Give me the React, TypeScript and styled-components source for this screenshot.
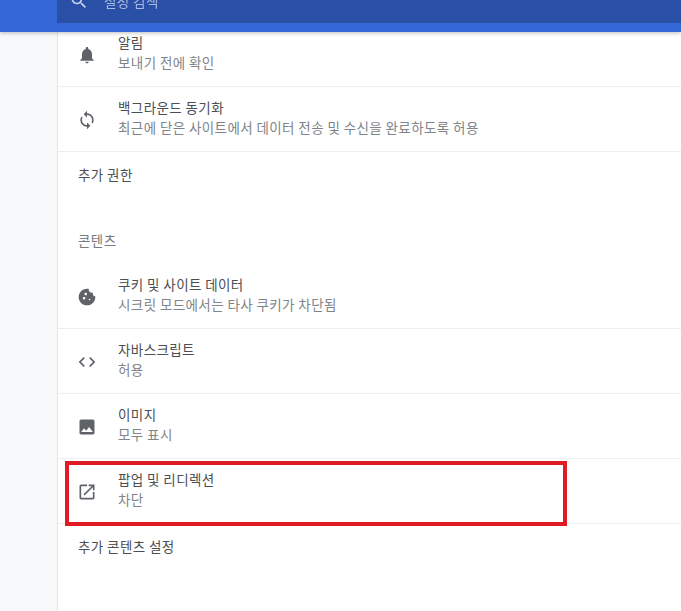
import { ReactNode } from "react";
import styled, { createGlobalStyle } from "styled-components";

const GlobalStyle = createGlobalStyle`
  html, body {
    margin: 0;
    height: 100%;
    overflow: hidden;
    background: #f8f9fb;
    font-family: "Noto Sans CJK KR", "Noto Sans", sans-serif;
  }
`;

const Page = styled.div`
  width: 681px;
  height: 611px;
  overflow: hidden;
  display: flex;
  flex-direction: column;
  filter: blur(0.45px);
`;

const Header = styled.header`
  position: relative;
  z-index: 2;
  height: 32px;
  flex: none;
  padding-left: 57px;
  background: #3367d6;
  box-shadow: 0 1px 4px rgba(60, 64, 67, 0.35);
`;

const SearchBox = styled.div`
  height: 23px;
  box-sizing: border-box;
  padding: 0 0 12px 12px;
  display: flex;
  align-items: flex-end;
  overflow: hidden;
  background: #2a4fa6;
  color: #c3d0ec;
`;

const SearchText = styled.span`
  margin-left: 15px;
  font-size: 13.5px;
  line-height: 20px;
  letter-spacing: 0.4px;
  color: #a9bbe2;
`;

const Panel = styled.main`
  flex: 1;
  margin-left: 57px;
  background: #fff;
  border-left: 1px solid #e3e5ea;
`;

const Row = styled.div<{ $clipped?: boolean }>`
  position: relative;
  height: 65px;
  margin-top: ${(props) => (props.$clipped ? "-10px" : "0")};
  padding: 0 0 4px 19px;
  box-sizing: border-box;
  display: flex;
  align-items: center;
  border-bottom: 1px solid #eceef0;
`;

const IconSlot = styled.div`
  width: 20px;
  height: 20px;
  margin-top: 6px;
  margin-right: 21px;
  color: #5f6368;
  svg {
    display: block;
    width: 20px;
    height: 20px;
    fill: currentColor;
  }
`;

const Title = styled.div`
  font-size: 13.5px;
  line-height: 20px;
  letter-spacing: 0.4px;
  color: #4b4e52;
`;

const Sub = styled.div`
  font-size: 13.5px;
  line-height: 20px;
  letter-spacing: 0.4px;
  color: #808489;
`;

const PlainLink = styled.div<{ $height: number }>`
  height: ${(props) => props.$height}px;
  padding-left: 20px;
  font-size: 13.5px;
  line-height: 45px;
  letter-spacing: 0.4px;
  color: #4b4e52;
`;

const SectionTitle = styled.h2`
  margin: 0;
  height: 66px;
  padding: 32px 0 0 20px;
  box-sizing: border-box;
  font-size: 13.5px;
  font-weight: 400;
  line-height: 20px;
  letter-spacing: 0.4px;
  color: #777b80;
`;

const Highlight = styled.div`
  position: absolute;
  left: 7px;
  top: 2px;
  width: 502px;
  height: 65px;
  box-sizing: border-box;
  border: 4px solid #e01b24;
`;

const icons: Record<string, string> = {
  bell: "M12 22c1.1 0 2-.9 2-2h-4c0 1.1.9 2 2 2zm6-6v-5c0-3.07-1.63-5.64-4.5-6.32V4c0-.83-.67-1.5-1.5-1.5s-1.5.67-1.5 1.5v.68C7.64 5.36 6 7.92 6 11v5l-2 2v1h16v-1l-2-2z",
  sync: "M12 4V1L8 5l4 4V6c3.31 0 6 2.69 6 6 0 1.01-.25 1.97-.7 2.8l1.46 1.46C19.54 15.03 20 13.57 20 12c0-4.42-3.58-8-8-8zm0 14c-3.31 0-6-2.69-6-6 0-1.01.25-1.97.7-2.8L5.24 7.74C4.46 8.97 4 10.43 4 12c0 4.42 3.58 8 8 8v3l4-4-4-4v3z",
  cookie: "M21.95 10.99c-1.79-.03-3.7-1.95-2.68-4.22-2.97 1-5.78-1.59-5.19-4.56C7.11.74 2 6.41 2 12c0 5.52 4.48 10 10 10 5.89 0 10.54-5.08 9.95-11.01zM8.5 15c-.83 0-1.5-.67-1.5-1.5S7.67 12 8.5 12s1.5.67 1.5 1.5S9.33 15 8.5 15zm2-5C9.67 10 9 9.33 9 8.5S9.67 7 10.5 7s1.5.67 1.5 1.5-.67 1.5-1.5 1.5zm4.5 6c-.55 0-1-.45-1-1s.45-1 1-1 1 .45 1 1-.45 1-1 1z",
  code: "M9.4 16.6L4.8 12l4.6-4.6L8 6l-6 6 6 6 1.4-1.4zm5.2 0l4.6-4.6-4.6-4.6L16 6l6 6-6 6-1.4-1.4z",
  image: "M21 19V5c0-1.1-.9-2-2-2H5c-1.1 0-2 .9-2 2v14c0 1.1.9 2 2 2h14c1.1 0 2-.9 2-2zM8.5 13.5l2.5 3.01L14.5 12l4.5 6H5l3.5-4.5z",
  open: "M19 19H5V5h7V3H5c-1.11 0-2 .9-2 2v14c0 1.1.89 2 2 2h14c1.1 0 2-.9 2-2v-7h-2v7zM14 3v2h3.59l-9.83 9.83 1.41 1.41L19 6.41V10h2V3h-7z",
};

const Icon = ({ name }: { name: string }) => (
  <IconSlot>
    <svg viewBox="0 0 24 24">
      <path d={icons[name]} />
    </svg>
  </IconSlot>
);

interface SettingProps {
  icon: string;
  title: string;
  sub: string;
  clipped?: boolean;
  children?: ReactNode;
}

const Setting = ({ icon, title, sub, clipped, children }: SettingProps) => (
  <Row $clipped={clipped}>
    <Icon name={icon} />
    <div>
      <Title>{title}</Title>
      <Sub>{sub}</Sub>
    </div>
    {children}
  </Row>
);

export default function App() {
  return (
    <Page>
      <GlobalStyle />
      <Header>
        <SearchBox>
          <svg width="20" height="20" viewBox="0 0 24 24" fill="currentColor">
            <path d="M15.5 14h-.79l-.28-.27A6.47 6.47 0 0 0 16 9.5 6.5 6.5 0 1 0 9.5 16c1.61 0 3.09-.59 4.23-1.57l.27.28v.79l5 4.99L20.49 19l-4.99-5zm-6 0C7.01 14 5 11.99 5 9.5S7.01 5 9.5 5 14 7.01 14 9.5 11.99 14 9.5 14z" />
          </svg>
          <SearchText>설정 검색</SearchText>
        </SearchBox>
      </Header>
      <Panel>
        <Setting clipped icon="bell" title="알림" sub="보내기 전에 확인" />
        <Setting
          icon="sync"
          title="백그라운드 동기화"
          sub="최근에 닫은 사이트에서 데이터 전송 및 수신을 완료하도록 허용"
        />
        <PlainLink $height={46}>추가 권한</PlainLink>
        <SectionTitle>콘텐츠</SectionTitle>
        <Setting
          icon="cookie"
          title="쿠키 및 사이트 데이터"
          sub="시크릿 모드에서는 타사 쿠키가 차단됨"
        />
        <Setting icon="code" title="자바스크립트" sub="허용" />
        <Setting icon="image" title="이미지" sub="모두 표시" />
        <Setting icon="open" title="팝업 및 리디렉션" sub="차단">
          <Highlight />
        </Setting>
        <PlainLink $height={46}>추가 콘텐츠 설정</PlainLink>
      </Panel>
    </Page>
  );
}
